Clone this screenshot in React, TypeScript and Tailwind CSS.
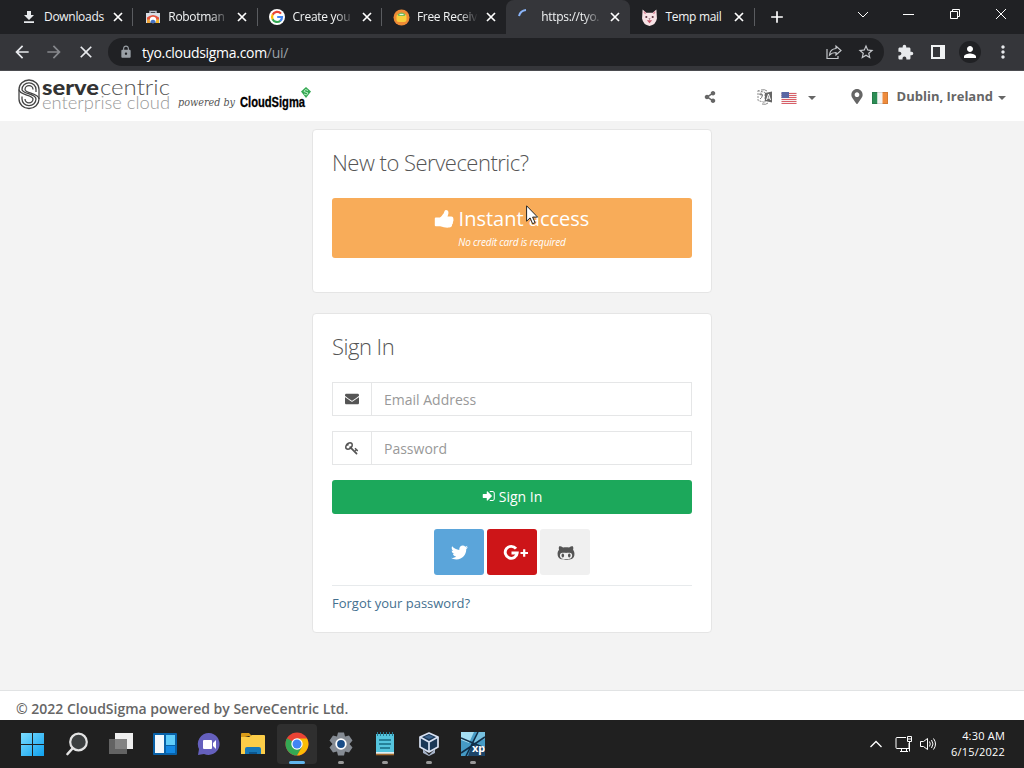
import { useState } from 'react';
import type { ReactNode } from 'react';
import { FaEnvelope, FaGithubAlt, FaMapMarkerAlt, FaShareAlt, FaTwitter } from 'react-icons/fa';
import { MdAdd, MdArrowBack, MdArrowForward, MdClose, MdExtension, MdLock, MdMoreVert, MdPerson, MdStarBorder } from 'react-icons/md';

/* ---------- Tab icons ---------- */

const DownloadIcon = () => (
  <svg width="16" height="16" viewBox="0 0 16 16" fill="#e8eaed">
    <path d="M6 2h4v4h3L8 11 3 6h3zM3 12.300h10v1.700H3z" />
  </svg>
);

const StoreIcon = () => (
  <svg width="16" height="16" viewBox="0 0 16 16">
    <path d="M5 5V2.500h6V5" fill="none" stroke="#b9c0ca" strokeWidth="1.500" />
    <path d="M1 4h14v10H1z" fill="#d8dde5" />
    <path d="M2 8.500q6-5 12 0V14H2z" fill="#e5533d" />
    <path d="M2 10.500h4V14H2z" fill="#f0a63a" />
    <path d="M10 10.500h4V14h-4z" fill="#f3b52c" />
    <circle cx="8" cy="11" r="3.200" fill="#fff" />
    <path d="M5.500 14a2.600 2.600 0 1 1 5 0z" fill="#4472c4" />
  </svg>
);

const GoogleIcon = () => (
  <svg width="16" height="16" viewBox="0 0 16 16">
    <circle cx="8" cy="8" r="8" fill="#fff" />
    <g fill="none" strokeWidth="2.200">
      <path d="M12 4.600A5 5 0 0 0 3.600 5.800" stroke="#ea4335" />
      <path d="M3.700 5.600a5 5 0 0 0 0 4.800" stroke="#fbbc05" />
      <path d="M3.600 10.200A5 5 0 0 0 11.400 11.700" stroke="#34a853" />
      <path d="M11.200 11.900A5 5 0 0 0 13 8H8.200" stroke="#4285f4" />
    </g>
  </svg>
);

const SmsIcon = () => (
  <svg width="17" height="17" viewBox="0 0 17 17">
    <circle cx="8.500" cy="8.500" r="8" fill="#ef8b35" />
    <rect x="3.500" y="5" width="10" height="8" rx="2.500" fill="#f8cf3d" />
    <path d="M4.500 5.500q4-4 8 0l-1 1.500h-6z" fill="#6fb955" />
    <path d="M6.500 5.500h4" stroke="#e9f6dd" strokeWidth="1.200" />
  </svg>
);

const SpinnerIcon = () => (
  <svg width="16" height="16" viewBox="0 0 16 16" fill="none" stroke="#8ab4f8" strokeWidth="2">
    <path d="M1 7A8 8 0 0 1 8 1" />
  </svg>
);

const CatIcon = () => (
  <svg width="17" height="17" viewBox="0 0 16 16">
    <path d="M1.500.500l3.500 3h6l3.500-3L15 9q-1 6-7 7-6-1-7-7z" fill="#f7e3e6" />
    <path d="M2.800 2.500l1.500 2M13.200 2.500l-1.500 2" stroke="#dc899b" strokeWidth="1.400" />
    <circle cx="5" cy="7.500" r="1" fill="#5c3340" />
    <circle cx="11" cy="7.500" r="1" fill="#5c3340" />
    <path d="M5.500 10.500h5l-2.500 3z" fill="#c5566b" />
    <path d="M7 9h2l-1 1z" fill="#5c3340" />
  </svg>
);

const TabCloseIcon = () => (
  <svg width="14" height="14" viewBox="0 0 14 14" className="ml-[6px] shrink-0" fill="none" stroke="#fff" strokeWidth="1.700">
    <path d="M3 3l8 8M11 3l-8 8" />
  </svg>
);

const tabs = [
  { title: 'Downloads', icon: <DownloadIcon />, fade: false },
  { title: 'Robotman', icon: <StoreIcon />, fade: true },
  { title: 'Create you', icon: <GoogleIcon />, fade: true },
  { title: 'Free Receiv', icon: <SmsIcon />, fade: true },
  { title: 'https://tyo.', icon: <SpinnerIcon />, fade: true, active: true },
  { title: 'Temp mail', icon: <CatIcon />, fade: false },
];

function TabStrip() {
  return (
    <div className="flex h-[34px] items-stretch bg-[#202124] pl-[9px]">
      {tabs.map((tab, index) => (
        <div
          key={tab.title}
          className={`flex w-[124.300px] shrink-0 items-center pl-2.5 ${tab.active ? 'rounded-t-lg bg-[#35363a]' : ''}`}
        >
          <span className="ml-px flex w-[17px] shrink-0 justify-center">{tab.icon}</span>
          <span
            className={`ml-[7px] w-[61px] shrink-0 whitespace-nowrap text-[12px] tracking-[-0.300px] text-[#f1f3f4] ${tab.fade ? '[mask-image:linear-gradient(to_right,black_70%,transparent)]' : ''}`}
          >
            {tab.title}
          </span>
          <TabCloseIcon />
          {!tab.active && index !== 3 && <span className="ml-auto h-[18px] w-px bg-[#5a5c60]" />}
        </div>
      ))}
      <MdAdd className="ml-[12px] mt-[7px] size-5 text-white" />
      <div className="ml-auto flex items-start gap-[30px] pr-[17px] pt-2 text-white">
        <svg width="12" height="12" className="mr-[-1px]" fill="none" stroke="currentColor"><path d="M2 4l5 5 5-5" /></svg>
        <svg width="16" height="12" className="ml-[2px]" fill="none" stroke="currentColor"><path d="M4 6.500h11" /></svg>
        <svg width="12" height="12" className="ml-[4px]" fill="none" stroke="currentColor"><path d="M1.500 3.500h7v7h-7zM3.500 3V1.500h7v7H9" /></svg>
        <svg width="12" height="12" className="ml-[4px]" fill="none" stroke="currentColor"><path d="M1 1l10 10M11 1L1 11" /></svg>
      </div>
    </div>
  );
}

function Toolbar() {
  return (
    <div className="flex h-[37px] items-center border-b border-[#4b4c50] bg-[#35363a] pl-3 text-[#e8eaed]">
      <MdArrowBack className="size-5" />
      <MdArrowForward className="ml-3 size-5 text-[#86888c]" />
      <MdClose className="ml-3 size-5" />
      <div className="ml-3 flex h-7 w-[776px] items-center rounded-full bg-[#202124] pl-[11px] pr-[9px]">
        <MdLock className="size-[14px] text-[#9aa0a6]" />
        <span className="ml-[9px] text-[14px] tracking-[-0.300px] text-white">
          tyo.cloudsigma.com<span className="text-[#9aa0a6]">/ui/</span>
        </span>
        <svg className="ml-auto" width="16" height="16" viewBox="0 0 16 16" fill="none" stroke="#c4c7cb" strokeWidth="1.200">
          <path d="M1 5v9.500h11V12M3.500 11q.5-6 6.500-6.500V2l5 4.500-5 4.500V8.500q-4 0-6.500 2.500z" />
        </svg>
        <MdStarBorder className="ml-[15px] size-[18px] text-[#c4c7cb]" />
      </div>
      <MdExtension className="ml-[13px] size-[17px]" />
      <svg className="ml-[17px]" width="14" height="14" viewBox="0 0 14 14">
        <path d="M1 1h12v12H1z" fill="none" stroke="#f1f3f4" strokeWidth="2" />
        <path d="M9 1h4v12H9z" fill="#f1f3f4" />
      </svg>
      <span className="ml-[14px] flex size-[22px] items-center justify-center rounded-full bg-[#202124]">
        <MdPerson className="size-[18px] text-white" />
      </span>
      <MdMoreVert className="ml-[12px] size-5" />
    </div>
  );
}

/* ---------- Site header ---------- */

const Logo = () => (
  <svg width="300" height="44" viewBox="0 0 300 44">
    <g transform="translate(1 4.500)" fill="none" stroke="#444" strokeWidth="1.300">
      <path d="M21 19.500V10A10 9.500 0 0 0 1 10C1 16 15 15 15 19.500A4 3.800 0 0 1 7 19.500" />
      <path d="M18 12.500V10A7 6.700 0 0 0 4 10C4 14.500 18 14 18 19.500A7 6.700 0 0 1 4 19.500V17" />
      <path d="M15 10A4 3.800 0 0 0 7 10C7 14 21 13.500 21 19.500A10 9.500 0 0 1 1 19.500V10" />
    </g>
    <text x="25" y="20" textLength="57" lengthAdjust="spacingAndGlyphs" className="fill-[#333333] font-['Lato',sans-serif] text-[21px] font-black">serve</text>
    <text x="83" y="20" textLength="70" lengthAdjust="spacingAndGlyphs" className="fill-[#555555] font-['Lato',sans-serif] text-[21px] font-light">centric</text>
    <text x="25" y="33.500" textLength="128" lengthAdjust="spacingAndGlyphs" className="fill-[#999999] font-['Lato',sans-serif] text-[17px] font-light">enterprise cloud</text>
    <text x="161" y="31" textLength="57" lengthAdjust="spacingAndGlyphs" className="fill-[#555555] font-['DejaVu_Serif',serif] text-[11px] italic">powered by</text>
    <text x="223" y="31.500" textLength="65" lengthAdjust="spacingAndGlyphs" className="fill-black stroke-black stroke-[0.300px] font-['Liberation_Sans_Narrow','Liberation_Sans',sans-serif] text-[14px] font-bold">CloudSigma</text>
    <g transform="translate(284 12)">
      <path d="M5 0l5 4.500L5 11 0 4.500z" fill="#35a853" />
      <path d="M7 3.500L4.500 2.500 3 4.500l4 1.500-1.500 2L3 7" fill="none" stroke="#b7efc3" />
    </g>
  </svg>
);

const Caret = () => <span className="size-0 border-x-4 border-t-4 border-x-transparent border-t-[#666666]" />;

function SiteHeader() {
  return (
    <header className="flex h-[50px] items-center bg-white pl-[17px] pr-[18px] pt-px text-[#666666]">
      <Logo />
      <FaShareAlt className="ml-auto size-3" />
      <svg className="ml-[41px]" width="16" height="16" viewBox="0 0 16 16">
        <path d="M1 1.500l7 2v10l-7-2z" fill="none" stroke="#888" strokeDasharray="2 1" />
        <path d="M2 5l4 1M4 3.500v3M3 10q2-1 2.500-4" fill="none" stroke="#777" />
        <path d="M8 4l7-1.500v11L8 12z" fill="#666" />
        <path d="M9.500 11L11.500 5l2 6M10 9h3" fill="none" stroke="#fff" />
        <path d="M4 1q4-1 6 1M5 15q4 1 6-1" fill="none" stroke="#888" />
      </svg>
      <svg className="ml-[8px] mt-[2px]" width="16" height="12" viewBox="0 0 16 12">
        <path d="M.5 0h15v12H.5z" fill="#f5f1f1" />
        <path d="M.5 1.500h15M.5 3.500h15M.5 5.500h15M.5 7.500h15M.5 9.500h15M.5 11.500h15" stroke="#d85f68" />
        <path d="M.5 0H8v6H.5z" fill="#5966a4" />
      </svg>
      <span className="ml-[11px] mt-[3px] flex"><Caret /></span>
      <FaMapMarkerAlt className="ml-[34px] h-[15px] w-[14px]" />
      <svg className="ml-[8px] mt-[2px]" width="16" height="12" viewBox="0 0 16 12">
        <path d="M0 0h5.500v12H0z" fill="#2c8d55" />
        <path d="M5.500 0h5v12h-5z" fill="#f4f4f4" />
        <path d="M10.500 0H16v12h-5.500z" fill="#ee8b3c" />
        <path d="M.5.5h15v11H.5z" fill="none" stroke="#000" strokeOpacity=".12" />
      </svg>
      <span className="ml-[9px] text-[13px] font-bold">Dublin, Ireland</span>
      <span className="ml-[5px] mt-[3px] flex"><Caret /></span>
    </header>
  );
}

/* ---------- Login page ---------- */

const ThumbsUpIcon = () => (
  <svg width="20" height="20" viewBox="0 0 20 20" fill="currentColor">
    <path d="M.8 9.500q0-1 1-1h4c1.700-1 2.600-2.500 3.800-4 .7-.9.700-3.500 2.200-3.500 2.200 0 2.900 1.500 2.600 3.500-.1 1-.6 1.900-.9 3h3.700c1.600 0 2.500 1.300 2.100 2.600.4 1 .2 2-.4 2.800.2 1-.1 2-.8 2.700.1 2-1 3-3 3-3.600.2-5.600-.2-9-1.300H1.800q-1 0-1-1z" />
  </svg>
);

const KeyIcon = () => (
  <svg width="14" height="14" viewBox="0 0 1792 1792" fill="currentColor">
    <path d="M832 512q0-80-56-136t-136-56-136 56-56 136q0 42 19 83-41-19-83-19-80 0-136 56t-56 136 56 136 136 56 136-56 56-136q0-42-19-83 41 19 83 19 80 0 136-56t56-136zm851 704q0 17-49 66t-66 49q-9 0-28.500-16t-36.500-33-38.500-40-24.500-26l-96 96 220 220q28 28 28 68 0 42-39 81t-81 39q-40 0-68-28l-671-671q-176 131-365 131-163 0-265.500-102.500t-102.500-265.500q0-160 95-313t248-248 313-95q163 0 265.500 102.500t102.500 265.500q0 189-131 365l355 355 96-96q-3-3-26-24.500t-40-38.500-33-36.500-16-28.500q0-17 49-66t66-49q13 0 23 10 6 6 46 44.500t82 79.500 86.500 86 73 78 28.500 41z" />
  </svg>
);

const SignInIcon = () => (
  <svg width="14" height="14" viewBox="128 0 1600 1792" fill="currentColor">
    <path d="M1312 896q0 26-19 45l-544 544q-19 19-45 19t-45-19-19-45v-288h-448q-26 0-45-19t-19-45v-384q0-26 19-45t45-19h448v-288q0-26 19-45t45-19 45 19l544 544q19 19 19 45zm352-352v704q0 119-84.500 203.500t-203.500 84.500h-320q-13 0-22.500-9.500t-9.500-22.500q0-4-1-20t-.5-26.500 3-23.500 10-19.500 20.500-6.500h320q66 0 113-47t47-113v-704q0-66-47-113t-113-47h-312l-11.500-1-11.500-3-8-5.500-7-9-2-13.500q0-4-1-20t-.5-26.500 3-23.500 10-19.500 20.500-6.500h320q119 0 203.500 84.500t84.500 203.500z" />
  </svg>
);

const GooglePlusIcon = () => (
  <svg width="25" height="18" viewBox="0 0 25 18" fill="none" stroke="white">
    <path d="M13 4.700A6 6 0 1 0 14.200 9H8.500" strokeWidth="2.900" />
    <path d="M17.500 9H25M21.200 5.200v7.600" strokeWidth="2.200" />
  </svg>
);

function Field({ icon, placeholder, type, value, onChange }: { icon: ReactNode; placeholder: string; type: string; value: string; onChange: (v: string) => void }) {
  return (
    <div className="flex h-[34px] border border-[#e5e6e7]">
      <span className="flex w-[39px] items-center justify-center border-r border-[#e5e6e7] text-[#555555]">{icon}</span>
      <input
        type={type}
        placeholder={placeholder}
        value={value}
        onChange={(e) => onChange(e.target.value)}
        className="min-w-0 flex-1 px-3 text-[14px] text-[#555555] outline-none placeholder:text-[#999999]"
      />
    </div>
  );
}

function LoginPage() {
  const [email, setEmail] = useState('');
  const [password, setPassword] = useState('');

  return (
    <main className="flex flex-1 flex-col items-center gap-5 bg-[#f3f3f3] pt-2">
      {/* Sign up card */}
      <section className="h-[164px] w-[400px] rounded border border-[#e5e5e5] bg-white px-[19px] pt-[15px]">
        <h2 className="text-[22px] font-light leading-[34px] tracking-[-0.500px] text-[#555555]">New to Servecentric?</h2>
        <button className="relative mt-[19px] flex h-[60px] w-full flex-col items-center rounded-[3px] bg-[#f8ac59] text-white">
          <span className="flex items-center gap-[5px] pr-px pt-[6px] text-[20px] leading-[30px]">
            <ThumbsUpIcon />
            Instant access
          </span>
          <span className="text-[10px] italic leading-[16px] tracking-[-0.200px]">No credit card is required</span>
          {/* Mouse pointer */}
          <svg className="absolute left-[194px] top-[7px]" width="13" height="20" viewBox="0 0 13 20">
            <path d="M.6.800v15.400l3.500-3.300 2.500 5.800 2.500-1.100-2.500-5.500h5z" fill="#fff" stroke="#222" />
          </svg>
        </button>
      </section>

      {/* Sign in card */}
      <section className="h-[320px] w-[400px] rounded border border-[#e5e5e5] bg-white px-[19px] pt-[15px]">
        <h2 className="text-[22px] font-light leading-[34px] tracking-[-0.500px] text-[#555555]">Sign In</h2>
        <form className="mt-[19px] flex flex-col gap-[15px]" onSubmit={(e) => e.preventDefault()}>
          <Field icon={<FaEnvelope className="size-[14px]" />} placeholder="Email Address" type="text" value={email} onChange={setEmail} />
          <Field icon={<KeyIcon />} placeholder="Password" type="password" value={password} onChange={setPassword} />
          <button className="flex h-[34px] items-center justify-center gap-[3px] rounded-[3px] bg-[#1ca85b] pb-[2px] text-[14px] text-white">
            <SignInIcon />
            Sign In
          </button>
          <div className="flex justify-center gap-[3px]">
            <button type="button" className="flex h-[46px] w-[50px] items-center justify-center rounded-[3px] bg-[#5ba5da] text-white">
              <FaTwitter className="size-[17px]" />
            </button>
            <button type="button" className="flex h-[46px] w-[50px] items-center justify-center rounded-[3px] bg-[#cd1518] pl-[6px] pt-px">
              <GooglePlusIcon />
            </button>
            <button type="button" className="flex h-[46px] w-[50px] items-center justify-center rounded-[3px] bg-[#f0f0f0] pl-[2px] pt-px text-[#555555]">
              <FaGithubAlt className="size-[18px]" />
            </button>
          </div>
        </form>
        <div className="mt-[10px] flex border-t border-[#e7eaec] pt-[8px]">
          <a href="#" className="text-[13px] text-[#44708f]">Forgot your password?</a>
        </div>
      </section>
    </main>
  );
}

/* ---------- Taskbar ---------- */

const StartIcon = () => (
  <svg width="24" height="24" viewBox="0 0 24 24">
    <defs>
      <linearGradient id="start" x1="0" y1="0" x2="1" y2="1">
        <stop offset="0" stopColor="#7bdcff" />
        <stop offset="1" stopColor="#0fa1ef" />
      </linearGradient>
    </defs>
    <path d="M0 1h11v11H0zM12 1h11v11H12zM0 13h11v11H0zM12 13h11v11H12z" fill="url(#start)" />
  </svg>
);

const SearchIcon = () => (
  <svg width="24" height="24" viewBox="0 0 24 24" fill="none" stroke="#e3e3e3" strokeLinecap="round">
    <circle cx="13.500" cy="10" r="8.300" strokeWidth="2.200" fill="#3c3f40" />
    <path d="M7.500 16.500L2.500 22" strokeWidth="2.600" />
  </svg>
);

const TaskViewIcon = () => (
  <svg width="24" height="24" viewBox="0 0 24 24">
    <path d="M6 1h18v16H6z" fill="#eeeeee" />
    <path d="M0 7h18v15H0z" fill="#707070" fillOpacity=".85" />
  </svg>
);

const WidgetsIcon = () => (
  <svg width="24" height="24" viewBox="0 0 24 24">
    <rect y="1" width="24" height="22" rx="1" fill="#0861a8" />
    <path d="M2 3h9v18H2z" fill="#f3f8fc" />
    <path d="M13 3h9v10h-9z" fill="#60cdfa" />
    <path d="M13 14h9v7h-9z" fill="#1389e5" />
  </svg>
);

const ChatIcon = () => (
  <svg width="24" height="24" viewBox="0 0 24 24">
    <path d="M12 1a11 11 0 1 1-5 21L1 23l1-6A11 11 0 0 1 12 1z" fill="#6560bd" />
    <rect x="6" y="8" width="9" height="9" rx="1" fill="#fff" />
    <path d="M16 11l3-3v9l-3-3z" fill="#fff" />
  </svg>
);

const FolderIcon = () => (
  <svg width="26" height="24" viewBox="0 0 26 24">
    <path d="M1 2q0-1 1-1h7l3 3h-3L1 6z" fill="#d99b18" />
    <path d="M1 5h8l3-2h12q1 0 1 1v18H1z" fill="#fccd48" />
    <path d="M5 22v-5q0-2 2-2h12q2 0 2 2v5z" fill="#1778b8" />
    <path d="M9 22v-2h8v2z" fill="#0b5791" />
  </svg>
);

const ChromeIcon = () => (
  <svg width="24" height="24" viewBox="0 0 24 24">
    <circle cx="12" cy="12" r="11.500" fill="#ea4335" />
    <path d="M12 12L2 6.300A11.500 11.500 0 0 0 12 23.500l5-8.600z" fill="#34a853" />
    <path d="M12 6.500h10A11.500 11.500 0 0 1 12 23.500l5-8.600z" fill="#fbbc05" />
    <circle cx="12" cy="12" r="5.700" fill="#fff" />
    <circle cx="12" cy="12" r="4.500" fill="#4285f4" />
  </svg>
);

const SettingsIcon = () => (
  <svg width="24" height="24" viewBox="0 0 24 24">
    <path d="M9 .500h6l1 4 4-1 3.500 5-3 3.500 3 3.500-3.500 5-4-1-1 4H9l-1-4-4 1-3.500-5 3-3.500-3-3.500L4 3.500l4 1z" fill="#858b93" />
    <circle cx="12" cy="12" r="4.800" fill="#194d88" stroke="#fff" strokeWidth="1.800" />
  </svg>
);

const NotepadIcon = () => (
  <svg width="20" height="24" viewBox="0 0 20 24">
    <path d="M1 2h18v19H1z" fill="#55c5de" />
    <path d="M1 20h18v3H1z" fill="#dfeef1" />
    <path d="M1 22.500h18" stroke="#a66a2c" strokeWidth="1.600" />
    <path d="M2.500 0v4M5.500 0v4M8.500 0v4M11.500 0v4M14.500 0v4M17.500 0v4" stroke="#257b93" />
    <path d="M4 8h12M4 12h12M5 16h10" stroke="#176b83" strokeWidth="1.500" />
  </svg>
);

const VirtualBoxIcon = () => (
  <svg width="22" height="24" viewBox="0 0 22 24">
    <path d="M5 17l6 6 6-6v4l-6 3-6-3z" fill="#a6b3c8" />
    <path d="M11 1l9 4v10l-9 5-9-5V5z" fill="#193756" stroke="#d8e1f2" strokeWidth="1.700" strokeLinejoin="round" />
    <path d="M2 5l9 5 9-5M11 10v10" fill="none" stroke="#d8e1f2" strokeWidth="1.700" />
    <path d="M6 5l5-2 5 2-5 2z" fill="#3c638d" />
  </svg>
);

const XpIcon = () => (
  <svg width="24" height="24" viewBox="0 0 24 24">
    <path d="M0 0h24v24H0z" fill="#469bc5" />
    <path d="M0 0h13L8 11 0 8z" fill="#a4def2" />
    <path d="M16 0h8v7L11 12z" fill="#76c0df" />
    <path d="M11 12l13 4v8H7z" fill="#1c4568" />
    <path d="M0 6l24 10M17 0L5 24M0 21L24 5" stroke="#102f49" strokeWidth="1.600" />
    <text x="11" y="20" className="fill-white font-['Noto_Sans',sans-serif] text-[11px] font-bold">xp</text>
  </svg>
);

const apps = [
  { name: 'start', icon: <StartIcon /> },
  { name: 'search', icon: <SearchIcon /> },
  { name: 'taskview', icon: <TaskViewIcon /> },
  { name: 'widgets', icon: <WidgetsIcon /> },
  { name: 'chat', icon: <ChatIcon /> },
  { name: 'explorer', icon: <FolderIcon /> },
  { name: 'chrome', icon: <ChromeIcon />, active: true },
  { name: 'settings', icon: <SettingsIcon />, open: true },
  { name: 'notepad', icon: <NotepadIcon />, open: true },
  { name: 'virtualbox', icon: <VirtualBoxIcon />, open: true },
  { name: 'xp', icon: <XpIcon />, open: true },
];

function Taskbar() {
  return (
    <div className="flex h-12 items-center bg-[#202020] pl-[13px] pr-[19px] text-white">
      <div className="flex gap-1">
        {apps.map((app) => (
          <div
            key={app.name}
            className={`relative flex size-10 items-center justify-center rounded ${app.active ? 'bg-[#2f2f2f]' : ''}`}
          >
            {app.icon}
            {app.active && <span className="absolute bottom-0 h-[3px] w-4 rounded-full bg-[#60b5ed]" />}
            {app.open && <span className="absolute bottom-0 h-[3px] w-1.5 rounded-full bg-[#999999]" />}
          </div>
        ))}
      </div>
      <svg className="ml-auto" width="14" height="10" viewBox="0 0 14 10" fill="none" stroke="currentColor" strokeWidth="1.300">
        <path d="M1.500 8L7 2.500 12.500 8" />
      </svg>
      <svg className="ml-[12px]" width="18" height="18" viewBox="0 0 18 18" fill="none" stroke="currentColor">
        <path d="M11 2.500H2q-1 0-1 1v9q0 1 1 1h12V8M5 16.500h8M6.500 14v2M11.500 14v2M12.500 1.500h4v5h-4zM14.500 6.500v10M13 4h3" />
      </svg>
      <svg className="ml-[6px]" width="18" height="18" viewBox="0 0 18 18" fill="none" stroke="currentColor">
        <path d="M1.500 6.500h3l4-3v11l-4-3h-3zM10.500 6.500q1.500 2.500 0 5M12.500 5q3 4 0 8M14.500 3.500q4 5.500 0 11" />
      </svg>
      <div className="ml-[14px] text-right text-[11px] leading-4 tracking-[0.200px]">
        <p>4:30 AM</p>
        <p>6/15/2022</p>
      </div>
    </div>
  );
}

export default function App() {
  return (
    <div className="flex h-screen w-full flex-col overflow-hidden bg-white font-['Open_Sans',sans-serif]">
      <TabStrip />
      <Toolbar />
      <SiteHeader />
      <LoginPage />
      <footer className="flex h-[30px] items-center border-t border-[#e1e3e4] bg-white pl-4 pt-[6px] text-[14px] font-semibold text-[#666666]">
        © 2022 CloudSigma powered by ServeCentric Ltd.
      </footer>
      <Taskbar />
    </div>
  );
}
